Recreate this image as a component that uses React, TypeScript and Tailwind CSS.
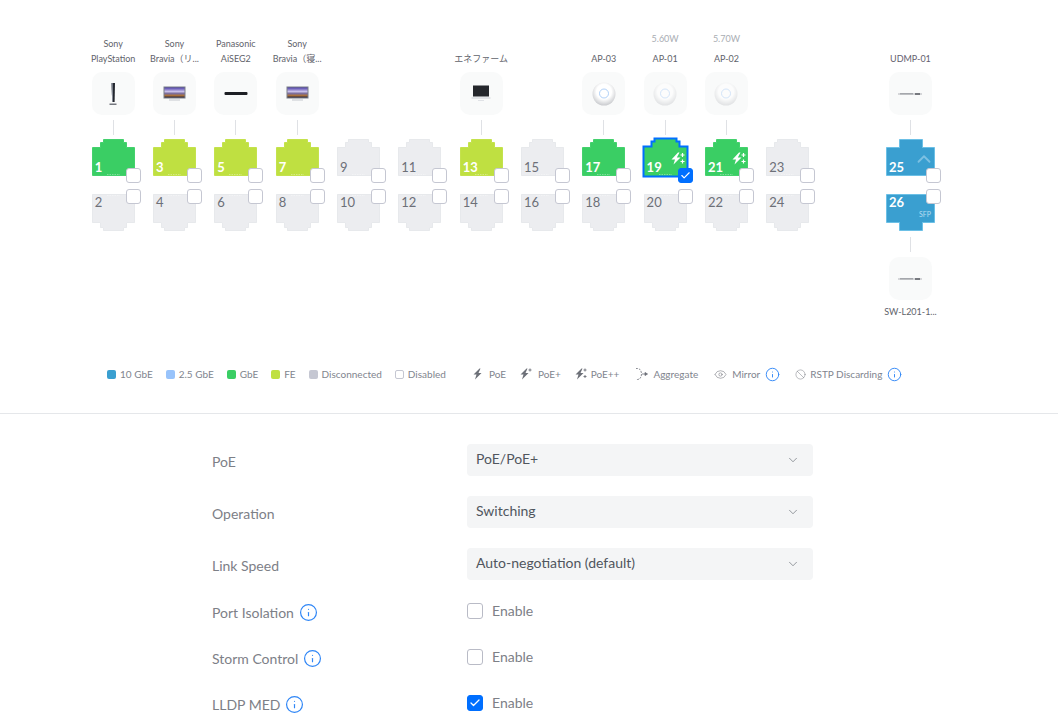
import { Check, ChevronDown, ChevronUp, Eye, Ban, Info } from "lucide-react";

const TOP_PATH = "M0.5 36.5V8.5H8.5V3.5H11.5V0.5H31.5V3.5H34.5V8.5H42.5V36.5Z";
const BOTTOM_PATH = "M0.5 0.5V28.5H8.5V33.5H11.5V36.5H31.5V33.5H34.5V28.5H42.5V0.5Z";
const SFP_TOP = "M0.5 36.5V8.5H13.5V0.5H36.5V8.5H48.5V36.5Z";
const SFP_BOTTOM = "M0.5 0.5V28.5H13.5V36.5H36.5V28.5H48.5V0.5Z";

const colors = {
  green: { fill: "#3ace64", stroke: "#4fd476", text: "text-white font-bold" },
  lime: { fill: "#bfe041", stroke: "#c8e55a", text: "text-white font-bold" },
  off: { fill: "#ecedf0", stroke: "#e3e4e9", text: "text-[#6d7078]" },
  sfp: { fill: "#3a9fd0", stroke: "#6cc0e6", text: "text-white font-bold" },
};

type Device = "ps" | "tv" | "bar" | "screen" | "ap" | "apdim" | "switch";

function DeviceArt({ kind }: { kind: Device }) {
  if (kind === "ps")
    return (
      <svg width="14" height="24" viewBox="0 0 14 24" className="blur-[0.3px]">
        <path d="M5.500 1h3.500l-.4 19H6.200z" fill="#23262e" />
        <path d="M5.500 1h1.200l.3 19H6.200z" fill="#8f95a1" />
        <path d="M3.500 21.500h7v1.500h-7z" fill="#74777f" />
      </svg>
    );
  if (kind === "tv")
    return (
      <svg width="23" height="16" viewBox="0 0 23 16" className="blur-[0.3px]">
        <defs>
          <linearGradient id="tvg" x1="0" y1="0" x2="0" y2="1">
            <stop offset="0" stopColor="#4d3fa8" />
            <stop offset="0.4" stopColor="#c9c0ea" />
            <stop offset="0.6" stopColor="#7d6f9c" />
            <stop offset="0.8" stopColor="#a8703c" />
            <stop offset="1" stopColor="#2f2a3a" />
          </linearGradient>
        </defs>
        <rect x="0.500" y="0.500" width="22" height="12" fill="#7b7e88" />
        <rect x="1.500" y="1.500" width="20" height="10" fill="url(#tvg)" />
        <rect x="6" y="13" width="11" height="2" fill="#dfe1e4" />
      </svg>
    );
  if (kind === "bar")
    return (
      <svg width="24" height="5" viewBox="0 0 24 5" className="blur-[0.3px]">
        <rect x="0.500" y="1" width="23" height="3" rx="1" fill="#1d1f24" />
      </svg>
    );
  if (kind === "screen")
    return (
      <svg width="20" height="18" viewBox="0 0 20 18" className="blur-[0.3px]">
        <rect x="2" y="0.500" width="16" height="11" fill="#25272c" />
        <rect x="0.500" y="12" width="19" height="2" fill="#e3e5e8" />
        <rect x="7" y="15" width="6" height="1" fill="#e0e2e6" />
      </svg>
    );
  if (kind === "ap" || kind === "apdim")
    return (
      <svg width="24" height="24" viewBox="0 0 24 24" className={kind === "apdim" ? "opacity-50" : ""}>
        <defs>
          <radialGradient id={`apg-${kind}`} cx="0.5" cy="0.4" r="0.65">
            <stop offset="0.5" stopColor="#ffffff" />
            <stop offset="1" stopColor="#bfc1c5" />
          </radialGradient>
        </defs>
        <circle cx="12" cy="12" r="11.500" fill={`url(#apg-${kind})`} />
        <circle cx="12" cy="11.500" r="4.500" fill="none" stroke="#9cc4f5" strokeWidth="0.800" />
      </svg>
    );
  return (
    <svg width="24" height="4" viewBox="0 0 24 4" className="blur-[0.3px]">
      <rect x="0" y="1" width="24" height="2" fill="#d5d6d9" />
      <rect x="2" y="1" width="13" height="1.500" fill="#a5a7ac" />
      <rect x="17" y="1" width="5" height="2" fill="#77797f" />
    </svg>
  );
}

function Tile({ kind }: { kind: Device }) {
  return (
    <div className="w-[43px] h-[43px] rounded-[10px] bg-[#f9fafa] flex items-center justify-center shrink-0">
      <DeviceArt kind={kind} />
    </div>
  );
}

function Wire() {
  return <div className="w-px h-[15px] bg-[#dfe1e5] shrink-0" />;
}

function PowerBolt() {
  return (
    <svg width="15" height="14" viewBox="0 0 15 14" fill="#fff" className="absolute right-[1px] top-[13px]">
      <path d="M7 0.500L0.500 7.500H4L2.500 12.500L9.500 5.500H5.800L8.500 0.500Z" />
      <path d="M11.500 1v4M9.500 3h4M11.500 7.500v4M9.500 9.500h4" stroke="#fff" strokeWidth="1.200" />
    </svg>
  );
}

function Box({ checked, className }: { checked?: boolean; className: string }) {
  return (
    <div
      className={`absolute w-[15px] h-[15px] rounded-[3px] flex items-center justify-center border ${
        checked ? "bg-[#006fff] border-[#006fff]" : "bg-white border-[#c5c7d2]"
      } ${className}`}
    >
      {checked && <Check size={11} strokeWidth={2.500} className="text-white" />}
    </div>
  );
}

function Port({
  n,
  tone = "off",
  bottom,
  poe,
  selected,
}: {
  n: number;
  tone?: "green" | "lime" | "off";
  bottom?: boolean;
  poe?: boolean;
  selected?: boolean;
}) {
  const c = colors[tone];
  return (
    <div className="relative w-[43px] h-[37px] shrink-0">
      <svg width="43" height="37" viewBox="0 0 43 37" className="absolute inset-0 overflow-visible">
        <path
          d={bottom ? BOTTOM_PATH : TOP_PATH}
          fill={c.fill}
          stroke={selected ? "#006fff" : c.stroke}
          strokeWidth={selected ? 4 : 1}
          paintOrder="stroke"
        />
        <path
          d={bottom ? "M15 1.500H28" : "M15 35.500H28"}
          stroke="#fff"
          strokeOpacity="0.35"
          strokeDasharray="1.500 1"
        />
      </svg>
      <span
        className={`absolute left-[3px] text-[13px] leading-[14px] ${c.text} ${
          bottom ? "top-[1px]" : "top-[21px]"
        }`}
      >
        {n}
      </span>
      {poe && <PowerBolt />}
      <Box
        checked={selected}
        className={bottom ? "right-[-6px] top-[-5px]" : "right-[-6px] bottom-[-7px]"}
      />
    </div>
  );
}

function Column({
  top,
  bottom,
  tone,
  lines,
  watts,
  device,
  poe,
  selected,
}: {
  top: number;
  bottom: number;
  tone?: "green" | "lime" | "off";
  lines?: string[];
  watts?: string;
  device?: Device;
  poe?: boolean;
  selected?: boolean;
}) {
  return (
    <div className="w-[61.33px] flex flex-col items-center shrink-0">
      <div className="h-[139px] flex flex-col items-center justify-end">
        {device && (
          <>
            {watts && <div className="text-[9px] leading-[15px] text-[#a9adb3] mb-[5px]">{watts}</div>}
            <div className="mb-[6px]">
              {lines?.map((l) => (
                <div key={l} className="text-[9px] leading-[15px] text-[#5f636b] text-center whitespace-nowrap">
                  {l}
                </div>
              ))}
            </div>
            <Tile kind={device} />
            <div className="mt-[5px] mb-[4px]">
              <Wire />
            </div>
          </>
        )}
      </div>
      <Port n={top} tone={tone} poe={poe} selected={selected} />
      <div className="h-[18px]" />
      <Port n={bottom} bottom />
    </div>
  );
}

function SfpColumn() {
  return (
    <div className="w-[61px] flex flex-col items-center shrink-0 ml-[61.5px]">
      <div className="h-[139px] flex flex-col items-center justify-end">
        <div className="text-[9px] leading-[15px] text-[#64606f] mb-[6px]">UDMP-01</div>
        <Tile kind="switch" />
        <div className="mt-[5px] mb-[4px]">
          <Wire />
        </div>
      </div>
      <div className="relative w-[49px] h-[37px]">
        <svg width="49" height="37" viewBox="0 0 49 37" className="absolute inset-0">
          <path d={SFP_TOP} fill={colors.sfp.fill} stroke={colors.sfp.stroke} />
        </svg>
        <span className="absolute left-[3px] top-[21px] text-[13px] leading-[14px] font-bold text-white">25</span>
        <ChevronUp size={22} strokeWidth={2} className="absolute right-[0px] top-[9px] text-[#7cc0e2]" />
        <Box className="right-[-6px] bottom-[-7px]" />
      </div>
      <div className="h-[18px]" />
      <div className="relative w-[49px] h-[37px]">
        <svg width="49" height="37" viewBox="0 0 49 37" className="absolute inset-0">
          <path d={SFP_BOTTOM} fill={colors.sfp.fill} stroke={colors.sfp.stroke} />
        </svg>
        <span className="absolute left-[3px] top-[1px] text-[13px] leading-[14px] font-bold text-white">26</span>
        <span className="absolute right-[4px] top-[15px] text-[7px] leading-[10px] text-[#b5dcf0]">SFP</span>
        <Box className="right-[-6px] top-[-5px]" />
      </div>
      <div className="mt-[6px] mb-[5px]">
        <Wire />
      </div>
      <Tile kind="switch" />
      <div className="text-[9px] leading-[15px] text-[#5f636b] mt-[4px] whitespace-nowrap">SW-L201-1...</div>
    </div>
  );
}

function Swatch({ className }: { className: string }) {
  return <span className={`w-[9px] h-[9px] rounded-[2px] ${className}`} />;
}

function Bolt({ plus }: { plus?: 0 | 1 | 2 }) {
  return (
    <svg width="13" height="12" viewBox="0 0 13 12" fill="#6d7078">
      <path d="M7.500 0.500L1.500 6.500H4.500L3 11.500L9.500 5H6.500L8.500 0.500Z" />
      {plus && <path d="M11 0.500v3M9.500 2h3" stroke="#6d7078" strokeWidth="0.900" />}
      {plus === 2 && <path d="M11 7v3M9.500 8.500h3" stroke="#6d7078" strokeWidth="0.900" />}
    </svg>
  );
}

function AggregateIcon() {
  return (
    <svg width="15" height="14" viewBox="0 0 15 14" fill="none" stroke="#6d7078" strokeWidth="0.800">
      <path d="M2 1.500h1.500c2.500 0 4 2.500 4 5.500s-1.500 5.500-4 5.500H2" strokeDasharray="2 1" />
      <path d="M8 7h4" />
      <path d="M11 5.500L13.500 7 11 8.500z" fill="#6d7078" />
    </svg>
  );
}

function InfoIcon({ size = 15, className = "" }: { size?: number; className?: string }) {
  return <Info size={size} strokeWidth={1.500} className={`text-[#2f86f6] shrink-0 ${className}`} />;
}

function Legend() {
  return (
    <div className="h-[20px] -mt-px pl-[107px] flex items-center gap-[13px] text-[10px] text-[#81858e] whitespace-nowrap">
      <span className="flex items-center gap-[4px]">
        <Swatch className="bg-[#3a9fd0]" />
        10 GbE
      </span>
      <span className="flex items-center gap-[4px]">
        <Swatch className="bg-[#98c3fb]" />
        2.5 GbE
      </span>
      <span className="flex items-center gap-[4px]">
        <Swatch className="bg-[#3ace64]" />
        GbE
      </span>
      <span className="flex items-center gap-[4px]">
        <Swatch className="bg-[#bfe041]" />
        FE
      </span>
      <span className="flex items-center gap-[4px]">
        <Swatch className="bg-[#c5c7d2]" />
        Disconnected
      </span>
      <span className="flex items-center gap-[4px]">
        <Swatch className="bg-white border border-[#c5c7d2]" />
        Disabled
      </span>
      <span className="flex items-center gap-[4px] ml-[13px]">
        <Bolt />
        PoE
      </span>
      <span className="flex items-center gap-[6px]">
        <Bolt plus={1} />
        PoE+
      </span>
      <span className="flex items-center gap-[4px]">
        <Bolt plus={2} />
        PoE++
      </span>
      <span className="flex items-center gap-[4px] ml-[2px]">
        <AggregateIcon />
        Aggregate
      </span>
      <span className="flex items-center gap-[5px] ml-[3px]">
        <Eye size={13} strokeWidth={1} className="text-[#6d7078]" />
        Mirror
        <InfoIcon />
      </span>
      <span className="flex items-center gap-[4px] ml-[2px]">
        <Ban size={11} strokeWidth={1} className="text-[#6d7078]" />
        RSTP Discarding
        <InfoIcon className="ml-px" />
      </span>
    </div>
  );
}

function SelectRow({ label, value }: { label: string; value: string }) {
  return (
    <div className="flex items-center h-[32px] mb-[20px]">
      <div className="w-[255px] text-[14px] text-[#7d8087] pt-[2px]">{label}</div>
      <div className="w-[346px] h-[32px] bg-[#f4f5f6] rounded-[4px] flex items-center justify-between pl-[9px] pr-[13px] text-[14px] text-[#50565e]">
        <span className="-mt-[4px]">{value}</span>
        <ChevronDown size={14} strokeWidth={1} className="text-[#50565e]" />
      </div>
    </div>
  );
}

function ToggleRow({ label, info, checked }: { label: string; info?: boolean; checked?: boolean }) {
  return (
    <div className="flex items-center h-[22px] mb-[24px]">
      <div className="w-[255px] flex items-center gap-[5px] text-[14px] text-[#7d8087] pt-[2px]">
        {label}
        {info && <InfoIcon size={19} />}
      </div>
      <div className="flex items-center gap-[9px]">
        <span
          className={`w-[16px] h-[16px] rounded-[3px] border flex items-center justify-center ${
            checked ? "bg-[#006fff] border-[#006fff]" : "bg-white border-[#b9bbc6]"
          }`}
        >
          {checked && <Check size={12} strokeWidth={2.500} className="text-white" />}
        </span>
        <span className="text-[14px] text-[#7d8087] -mt-[2px]">Enable</span>
      </div>
    </div>
  );
}

export default function App() {
  return (
    <div className="w-[1058px] h-[728px] overflow-hidden bg-white font-['Lato','Noto_Sans_CJK_JP',sans-serif]">
      <section className="h-[414px] border-b border-[#e5e7ea]">
        <div className="h-[365px] pl-[82.5px] flex items-start">
          <Column top={1} bottom={2} tone="green" device="ps" lines={["Sony", "PlayStation"]} />
          <Column top={3} bottom={4} tone="lime" device="tv" lines={["Sony", "Bravia（リ..."]} />
          <Column top={5} bottom={6} tone="lime" device="bar" lines={["Panasonic", "AiSEG2"]} />
          <Column top={7} bottom={8} tone="lime" device="tv" lines={["Sony", "Bravia（寝..."]} />
          <Column top={9} bottom={10} />
          <Column top={11} bottom={12} />
          <Column top={13} bottom={14} tone="lime" device="screen" lines={["エネファーム"]} />
          <Column top={15} bottom={16} />
          <Column top={17} bottom={18} tone="green" device="ap" lines={["AP-03"]} />
          <Column top={19} bottom={20} tone="green" device="apdim" lines={["AP-01"]} watts="5.60W" poe selected />
          <Column top={21} bottom={22} tone="green" device="apdim" lines={["AP-02"]} watts="5.70W" poe />
          <Column top={23} bottom={24} />
          <SfpColumn />
        </div>
        <Legend />
      </section>
      <section className="pt-[30px] pl-[212px]">
        <SelectRow label="PoE" value="PoE/PoE+" />
        <SelectRow label="Operation" value="Switching" />
        <SelectRow label="Link Speed" value="Auto-negotiation (default)" />
        <ToggleRow label="Port Isolation" info />
        <ToggleRow label="Storm Control" info />
        <ToggleRow label="LLDP MED" info checked />
      </section>
    </div>
  );
}
